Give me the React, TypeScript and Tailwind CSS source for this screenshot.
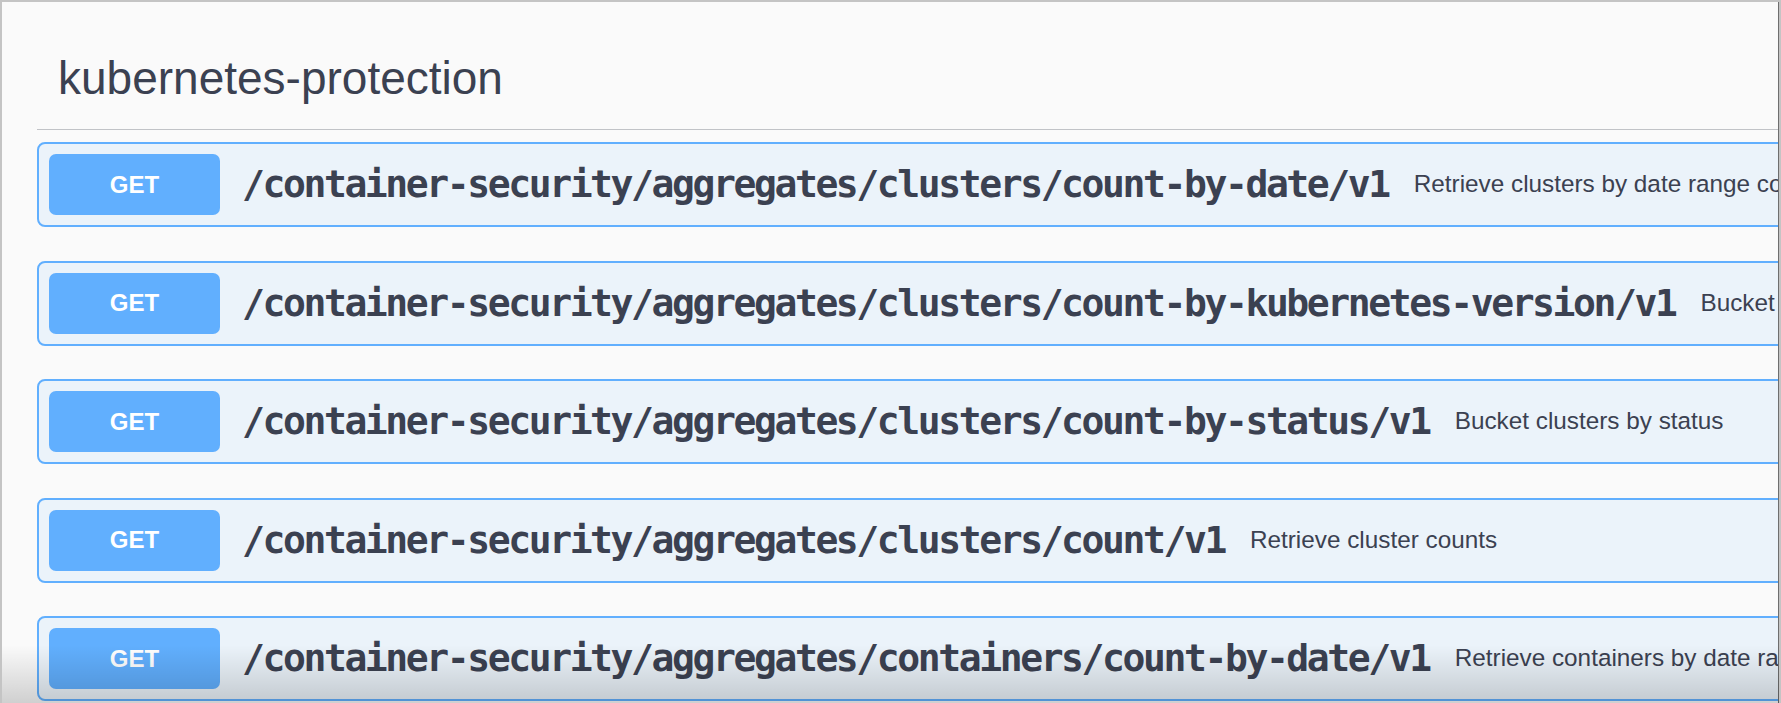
const rows = [
  {
    path: "/container-security/aggregates/clusters/count-by-date/v1",
    summary: "Retrieve clusters by date range counts",
  },
  {
    path: "/container-security/aggregates/clusters/count-by-kubernetes-version/v1",
    summary: "Bucket clusters by kubernetes version",
  },
  {
    path: "/container-security/aggregates/clusters/count-by-status/v1",
    summary: "Bucket clusters by status",
  },
  {
    path: "/container-security/aggregates/clusters/count/v1",
    summary: "Retrieve cluster counts",
  },
  {
    path: "/container-security/aggregates/containers/count-by-date/v1",
    summary: "Retrieve containers by date range counts",
  },
];

function OpBlock({ path, summary }: { path: string; summary: string }) {
  return (
    <div className="flex h-[85px] items-center overflow-hidden whitespace-nowrap rounded-[8px] border-2 border-[#61affe] bg-[#ebf3fa] px-[10px]">
      <span className="flex h-[61px] w-[171px] shrink-0 items-center justify-center rounded-[7px] bg-[#61affe] text-[24px] font-bold text-white">
        GET
      </span>
      <span className="ml-[22px] font-['DejaVu_Sans_Mono',monospace] text-[38px] font-bold tracking-[-2.4px] text-[#3b4151]">
        {path}
      </span>
      <span className="ml-[25px] text-[24.3px] text-[#3b4151]">{summary}</span>
    </div>
  );
}

export default function App() {
  return (
    <div className="relative h-[703px] w-[1781px] overflow-hidden border-l-2 border-r-2 border-t-2 border-[#c4c4c4] bg-[#fafafa] font-['Liberation_Sans',Arial,sans-serif]">
      <div className="h-full overflow-hidden border-r border-[#6e6e6e]">
        <div className="w-[1800px] pl-[35px]">
          <div className="border-b border-[#c1c3c7] pb-[28px] pl-[21px] pt-[53px]">
            <h3 className="text-[46px] leading-none text-[#3b4151]">kubernetes-protection</h3>
          </div>
          <div className="mt-[12px] flex flex-col gap-[33.5px]">
            {rows.map((r) => (
              <OpBlock key={r.path} path={r.path} summary={r.summary} />
            ))}
          </div>
        </div>
      </div>
      <div className="pointer-events-none absolute inset-x-0 bottom-0 h-[58px] bg-gradient-to-b from-transparent to-black/[0.17]" />
    </div>
  );
}
